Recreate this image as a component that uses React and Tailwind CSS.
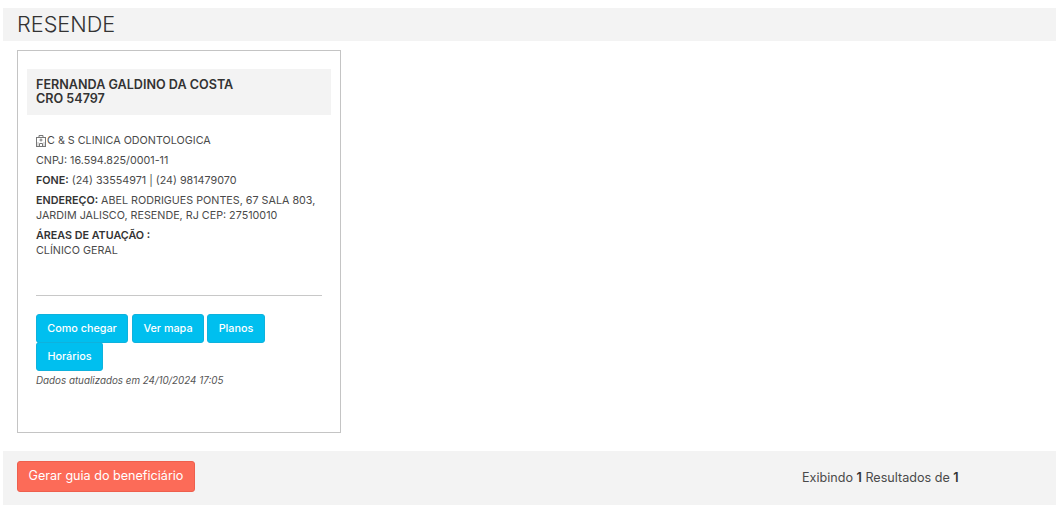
import React from 'react';

const actions = ['Como chegar', 'Ver mapa', 'Planos'];

function ClinicIcon() {
    return (
        <svg width="10" height="12" viewBox="0 0 10 12" fill="none" stroke="#777" strokeWidth="1" className="shrink-0">
            <path d="M3 2V.5h4V2" />
            <rect x=".5" y="2.5" width="9" height="9" />
            <path d="M5 3.5v3M3.5 5h3" />
            <path d="M3.5 11.5v-3h3v3" />
            <path d="M1.5 8h1M7.5 8h1M1.5 10h1M7.5 10h1" />
        </svg>
    );
}

function ActionButton({ label, className }) {
    return (
        <button className={`h-[29px] rounded-[3px] border border-[#0eb2dd] bg-[#00bfef] text-[10.8px] font-medium text-white ${className}`}>
            {label}
        </button>
    );
}

export default function App() {
    return (
        <div className="min-h-[519px] bg-white px-[3px] pt-2 font-['Inter',sans-serif] text-[#333]">
            {/* Title */}
            <div className="flex h-[33px] items-center bg-[#f3f3f3] pl-[14px]">
                <h1 className="text-[21.7px] font-light leading-none text-[#333]">RESENDE</h1>
            </div>

            {/* Card */}
            <div className="ml-[14px] mt-[9px] h-[383px] w-[324px] border border-[#c4c4c4] px-[9px] pt-[18px]">
                <div className="h-[46px] bg-[#f3f3f3] px-[9px] pt-[9px] text-[12.6px] font-semibold leading-[14px] text-[#333]">
                    <div>FERNANDA GALDINO DA COSTA</div>
                    <div>CRO 54797</div>
                </div>

                <div className="px-[9px] pt-[18px] text-[10.75px] leading-[15px] text-[#4a4a4a]">
                    <div className="flex h-[15px] items-center gap-[1px]">
                        <ClinicIcon />
                        <span>C &amp; S CLINICA ODONTOLOGICA</span>
                    </div>
                    <div className="mt-[5px]">CNPJ: 16.594.825/0001-11</div>
                    <div className="mt-[5px]"><b className="font-semibold text-[#333]">FONE:</b> (24) 33554971 | (24) 981479070</div>
                    <div className="mt-[5px]">
                        <b className="font-semibold text-[#333]">ENDEREÇO:</b> ABEL RODRIGUES PONTES, 67 SALA 803,<br />
                        JARDIM JALISCO, RESENDE, RJ CEP: 27510010
                    </div>
                    <div className="mt-[5px] font-semibold text-[#333]">ÁREAS DE ATUAÇÃO :</div>
                    <div>CLÍNICO GERAL</div>

                    <hr className="mt-[37px] border-t border-[#c8c8c8]" />

                    <div className="mt-[18px] flex gap-1">
                        {actions.map((label, i) => (
                            <ActionButton key={label} label={label} className={i === 0 ? 'w-[92px]' : i === 1 ? 'w-[72px]' : 'w-[58px] ml-[-1px]'} />
                        ))}
                    </div>
                    <ActionButton label="Horários" className="block w-[67px] -mt-px" />
                    <div className="mt-[2px] text-[9.8px] italic leading-[15px] text-[#555]">Dados atualizados em 24/10/2024 17:05</div>
                </div>
            </div>

            {/* Footer */}
            <div className="mt-[18px] flex h-[54px] items-start bg-[#f3f3f3] pl-[14px] pt-[10px]">
                <button className="h-[31px] w-[178px] rounded-[3px] border border-[#ee5f4d] bg-[#fc6b58] text-[12.6px] text-white">
                    Gerar guia do beneficiário
                </button>
                <div className="ml-[607px] mt-[8px] text-[12.6px] text-[#4a4a4a]">
                    Exibindo <b className="font-semibold text-[#333]">1</b> Resultados de <b className="font-semibold text-[#333]">1</b>
                </div>
            </div>
        </div>
    );
}
